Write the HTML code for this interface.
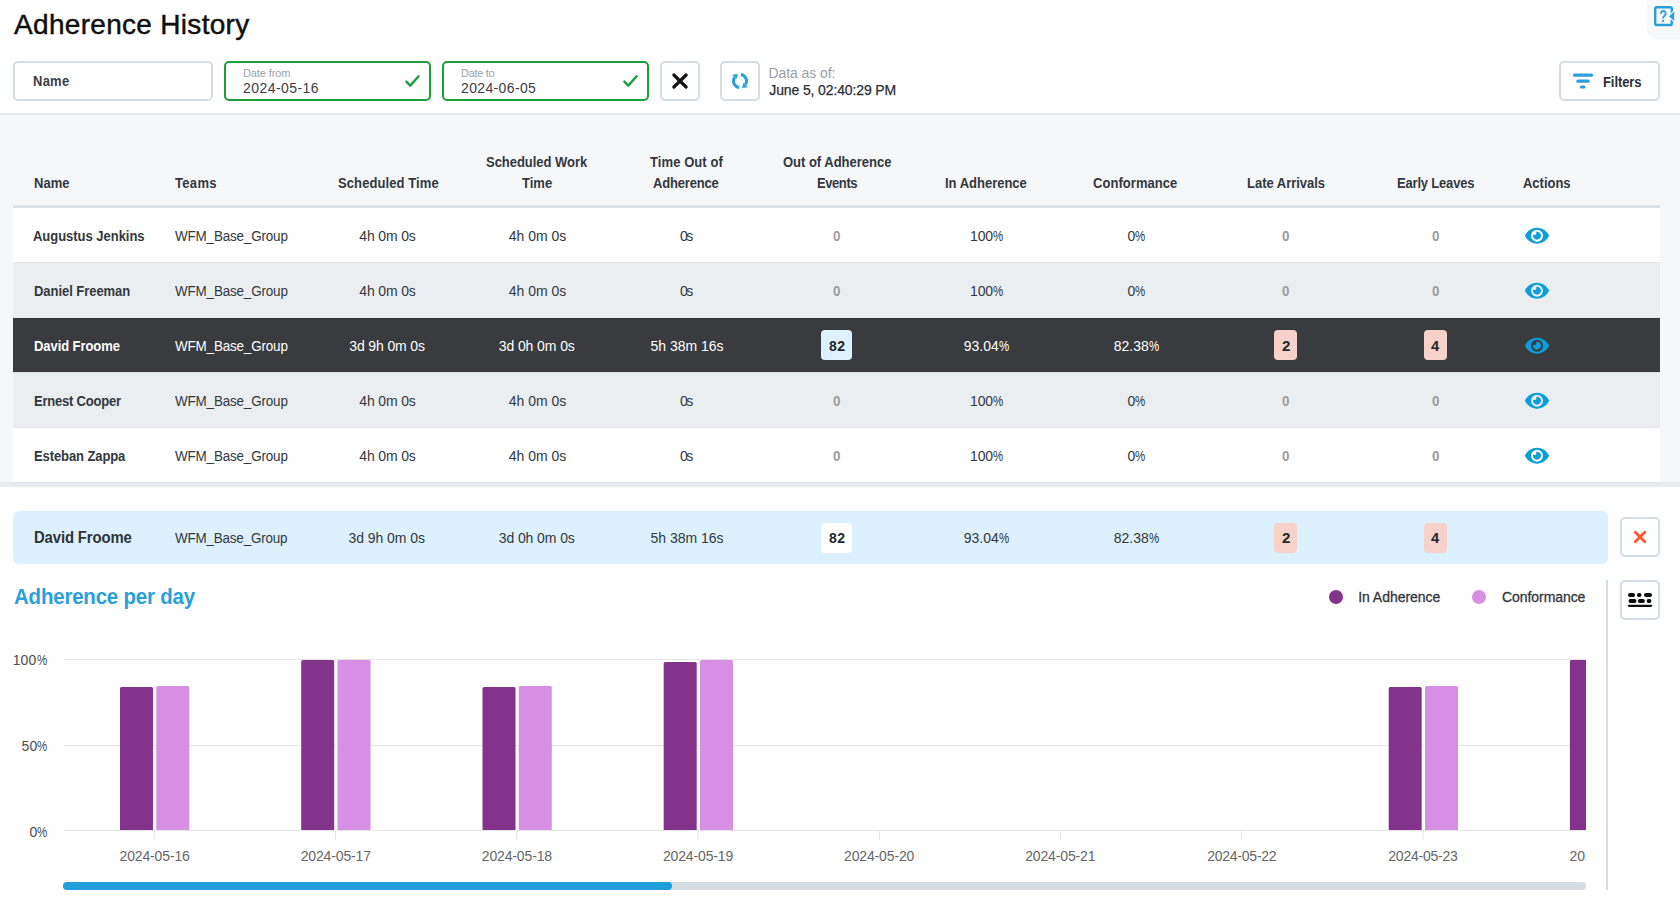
<!DOCTYPE html>
<html>
<head>
<meta charset="utf-8">
<title>Adherence History</title>
<style>
*{box-sizing:border-box;margin:0;padding:0}
html,body{width:1680px;height:907px;overflow:hidden;background:#fff}
body{font-family:"Liberation Sans",sans-serif;color:#33383d;position:relative;font-size:14px}
.abs{position:absolute}
.t{position:absolute;white-space:nowrap;transform-origin:0 0}
.pc{display:inline-block;font-style:normal;transform:scaleX(0.82);transform-origin:0 0;margin-right:-2.25px}
.box{position:absolute;top:61px;height:40px;border:2px solid #d3dde5;border-radius:5px;background:#fff}
.box.g{border-color:#1b9e3a}
.btn{position:absolute;width:40px;height:40px;border:2px solid #d3dde5;border-radius:5px;background:#fff}
.row{position:absolute;left:13px;width:1647px;height:55px;border-bottom:1px solid #e1e5e9;background:#fff}
.row.alt{background:#ebeef1}
.row.sel{background:#3a3b3e;border-bottom:1px solid #dfe3e7}
.bdg{position:absolute;height:30px;border-radius:4px}
.eye{position:absolute;left:1525px;width:24px;height:21.33px}
</style>
</head>
<body>
<div class="abs" style="left:0;top:113px;width:1680px;height:2px;background:#e9ebee"></div>
<div class="abs" style="left:0;top:115px;width:1680px;height:368px;background:#f6f7f9"></div>
<div class="abs" style="left:0;top:482px;width:1680px;height:5px;background:#e8ebee"></div>
<div class="box" style="left:13px;width:200px"></div>
<div class="box g" style="left:224px;width:207px"></div><svg class="abs" style="left:402.6px;top:72px" width="20" height="18" viewBox="0 0 20 18"><path d="M3.4 9.6 L7.3 13.6 L15.6 4.3" fill="none" stroke="#1f9e3d" stroke-width="2.4" stroke-linecap="round" stroke-linejoin="round"/></svg>
<div class="box g" style="left:442px;width:207px"></div><svg class="abs" style="left:620.6px;top:72px" width="20" height="18" viewBox="0 0 20 18"><path d="M3.4 9.6 L7.3 13.6 L15.6 4.3" fill="none" stroke="#1f9e3d" stroke-width="2.4" stroke-linecap="round" stroke-linejoin="round"/></svg>
<div class="btn" style="left:660px;top:61px"></div><svg class="abs" style="left:670px;top:71px" width="20" height="20" viewBox="0 0 20 20"><path d="M3.9 4.0 L16.1 16.0 M16.1 4.0 L3.9 16.0" stroke="#161616" stroke-width="3.3" stroke-linecap="round" fill="none"/></svg>
<div class="btn" style="left:720px;top:61px"></div><svg class="abs" style="left:732px;top:73px" width="16" height="16" viewBox="0 0 16 16"><g fill="none" stroke="#2a9fd8" stroke-width="3"><path d="M7.1 14.44 A6.5 6.5 0 0 1 2.68 4.27"/><path d="M8.9 1.56 A6.5 6.5 0 0 1 13.32 11.73"/></g><path d="M0.1 1.7 L5.9 1.1 L4.7 6.0 Z" fill="#2a9fd8"/><path d="M15.9 14.3 L10.1 14.9 L11.3 10.0 Z" fill="#2a9fd8"/></svg>
<div class="btn" style="left:1559px;top:61px;width:101px"></div><svg class="abs" style="left:1573px;top:73px" width="22" height="18" viewBox="0 0 22 18"><g fill="#2a9fd8"><rect x="0" y="0.6" width="20" height="3.2" rx="1.6"/><rect x="3.3" y="6.6" width="13.4" height="3.2" rx="1.6"/><rect x="6.8" y="12.4" width="5.8" height="3.2" rx="1.6"/></g></svg>
<div class="abs" style="left:1649px;top:-8px;width:44px;height:45px;background:#f7f8fa;border-radius:9px;box-shadow:0 1px 5px rgba(0,0,0,0.07)"></div>
<svg class="abs" style="left:1652px;top:4px" width="28" height="24" viewBox="0 0 28 24"><rect x="3.2" y="3.2" width="16.6" height="17.8" rx="1.6" fill="none" stroke="#2a9fd8" stroke-width="2.4"/><path d="M15.2 12.2 L24 4.4 L24 20 Z" fill="#f7f8fa"/><path d="M17 12.2 L22.2 7.4 L22.2 17 Z" fill="#2a9fd8"/><text transform="translate(11.2 18) scale(0.8 1)" font-family="Liberation Sans, sans-serif" font-size="16" font-weight="bold" fill="#2a9fd8" text-anchor="middle">?</text></svg>
<div class="abs" style="left:13px;top:205px;width:1647px;height:3px;background:#dde2e7"></div>
<div class="row " style="top:208px"></div>
<svg class="eye" style="top:224.6px" viewBox="0 0 576 512"><path fill="#0c9ddb" d="M572.52 241.4C518.29 135.59 410.93 64 288 64S57.68 135.64 3.48 241.41a32.35 32.35 0 0 0 0 29.19C57.71 376.41 165.07 448 288 448s230.32-71.64 284.52-177.41a32.35 32.35 0 0 0 0-29.19zM288 400a144 144 0 1 1 144-144 143.93 143.93 0 0 1-144 144zm0-240a95.31 95.31 0 0 0-25.31 3.79 47.85 47.85 0 0 1-66.9 66.9A95.78 95.78 0 1 0 288 160z"/></svg>
<div class="row alt" style="top:263px"></div>
<svg class="eye" style="top:279.6px" viewBox="0 0 576 512"><path fill="#0c9ddb" d="M572.52 241.4C518.29 135.59 410.93 64 288 64S57.68 135.64 3.48 241.41a32.35 32.35 0 0 0 0 29.19C57.71 376.41 165.07 448 288 448s230.32-71.64 284.52-177.41a32.35 32.35 0 0 0 0-29.19zM288 400a144 144 0 1 1 144-144 143.93 143.93 0 0 1-144 144zm0-240a95.31 95.31 0 0 0-25.31 3.79 47.85 47.85 0 0 1-66.9 66.9A95.78 95.78 0 1 0 288 160z"/></svg>
<div class="row sel" style="top:318px"></div>
<svg class="eye" style="top:334.6px" viewBox="0 0 576 512"><path fill="#0c9ddb" d="M572.52 241.4C518.29 135.59 410.93 64 288 64S57.68 135.64 3.48 241.41a32.35 32.35 0 0 0 0 29.19C57.71 376.41 165.07 448 288 448s230.32-71.64 284.52-177.41a32.35 32.35 0 0 0 0-29.19zM288 400a144 144 0 1 1 144-144 143.93 143.93 0 0 1-144 144zm0-240a95.31 95.31 0 0 0-25.31 3.79 47.85 47.85 0 0 1-66.9 66.9A95.78 95.78 0 1 0 288 160z"/></svg>
<div class="row alt" style="top:373px"></div>
<svg class="eye" style="top:389.6px" viewBox="0 0 576 512"><path fill="#0c9ddb" d="M572.52 241.4C518.29 135.59 410.93 64 288 64S57.68 135.64 3.48 241.41a32.35 32.35 0 0 0 0 29.19C57.71 376.41 165.07 448 288 448s230.32-71.64 284.52-177.41a32.35 32.35 0 0 0 0-29.19zM288 400a144 144 0 1 1 144-144 143.93 143.93 0 0 1-144 144zm0-240a95.31 95.31 0 0 0-25.31 3.79 47.85 47.85 0 0 1-66.9 66.9A95.78 95.78 0 1 0 288 160z"/></svg>
<div class="row " style="top:428px"></div>
<svg class="eye" style="top:444.6px" viewBox="0 0 576 512"><path fill="#0c9ddb" d="M572.52 241.4C518.29 135.59 410.93 64 288 64S57.68 135.64 3.48 241.41a32.35 32.35 0 0 0 0 29.19C57.71 376.41 165.07 448 288 448s230.32-71.64 284.52-177.41a32.35 32.35 0 0 0 0-29.19zM288 400a144 144 0 1 1 144-144 143.93 143.93 0 0 1-144 144zm0-240a95.31 95.31 0 0 0-25.31 3.79 47.85 47.85 0 0 1-66.9 66.9A95.78 95.78 0 1 0 288 160z"/></svg>
<div class="bdg" style="left:821px;top:330px;width:31px;background:#dff1fd"></div>
<div class="bdg" style="left:1274px;top:330px;width:23px;background:#f7d2ca"></div>
<div class="bdg" style="left:1424px;top:330px;width:23px;background:#f7d2ca"></div>
<div class="abs" style="left:13px;top:511px;width:1595px;height:53px;background:#dcf1fd;border-radius:6px"></div>
<div class="bdg" style="left:821px;top:523px;width:31px;background:#ffffff"></div>
<div class="bdg" style="left:1274px;top:523px;width:23px;background:#f7d2ca"></div>
<div class="bdg" style="left:1424px;top:523px;width:23px;background:#f7d2ca"></div>
<div class="btn" style="left:1620px;top:517px"></div><svg class="abs" style="left:1630px;top:527px" width="20" height="20" viewBox="0 0 20 20"><path d="M5.25 5.25 L14.75 14.75 M14.75 5.25 L5.25 14.75" stroke="#ff5632" stroke-width="2.8" stroke-linecap="round" fill="none"/></svg>
<div class="abs" style="left:1329px;top:590px;width:14px;height:14px;border-radius:7px;background:#83338c"></div>
<div class="abs" style="left:1472px;top:590px;width:14px;height:14px;border-radius:7px;background:#d68fe2"></div>
<div class="abs" style="left:1606px;top:580px;width:2px;height:310px;background:#d5dfe6"></div>
<div class="btn" style="left:1620px;top:580px"></div><svg class="abs" style="left:1628px;top:590px" width="24" height="20" viewBox="0 0 24 20"><g fill="#0d0d0d"><rect x="0" y="2.9" width="7" height="4" rx="2"/><rect x="8.9" y="2.9" width="4.6" height="4" rx="2"/><rect x="16" y="3.1" width="8" height="4" rx="2"/><rect x="0.5" y="9.1" width="8" height="3.8" rx="1.9"/><rect x="9.9" y="9.1" width="7" height="3.8" rx="1.9"/><rect x="18.6" y="9.1" width="4.8" height="3.8" rx="1.9"/><rect x="0" y="14.8" width="24" height="2.2" rx="1"/></g></svg>
<svg class="abs" style="left:0;top:640px" width="1600" height="267" viewBox="0 640 1600 267">
<defs><clipPath id="cp"><rect x="64" y="650" width="1522" height="230"/></clipPath></defs>
<line x1="64" x2="1586" y1="659.5" y2="659.5" stroke="#e6e6e6" stroke-width="1"/>
<line x1="64" x2="1586" y1="745.5" y2="745.5" stroke="#e6e6e6" stroke-width="1"/>
<line x1="64" x2="1586" y1="830.5" y2="830.5" stroke="#e6e6e6" stroke-width="1"/>
<g clip-path="url(#cp)">
<line x1="154.3" x2="154.3" y1="831" y2="840" stroke="#e6e6e6" stroke-width="1"/>
<line x1="335.5" x2="335.5" y1="831" y2="840" stroke="#e6e6e6" stroke-width="1"/>
<line x1="516.8" x2="516.8" y1="831" y2="840" stroke="#e6e6e6" stroke-width="1"/>
<line x1="698.0" x2="698.0" y1="831" y2="840" stroke="#e6e6e6" stroke-width="1"/>
<line x1="879.3" x2="879.3" y1="831" y2="840" stroke="#e6e6e6" stroke-width="1"/>
<line x1="1060.5" x2="1060.5" y1="831" y2="840" stroke="#e6e6e6" stroke-width="1"/>
<line x1="1241.7" x2="1241.7" y1="831" y2="840" stroke="#e6e6e6" stroke-width="1"/>
<line x1="1423.0" x2="1423.0" y1="831" y2="840" stroke="#e6e6e6" stroke-width="1"/>
<line x1="1604.2" x2="1604.2" y1="831" y2="840" stroke="#e6e6e6" stroke-width="1"/>
<path d="M120.0 830 V688.5 Q120.0 687 121.5 687 H151.5 Q153.0 687 153.0 688.5 V830 Z" fill="#83338c"/>
<path d="M156.3 830 V687.5 Q156.3 686 157.8 686 H187.8 Q189.3 686 189.3 687.5 V830 Z" fill="#d68fe2"/>
<path d="M301.2 830 V661.5 Q301.2 660 302.7 660 H332.7 Q334.2 660 334.2 661.5 V830 Z" fill="#83338c"/>
<path d="M337.5 830 V661.5 Q337.5 660 339.0 660 H369.0 Q370.5 660 370.5 661.5 V830 Z" fill="#d68fe2"/>
<path d="M482.5 830 V688.5 Q482.5 687 484.0 687 H514.0 Q515.5 687 515.5 688.5 V830 Z" fill="#83338c"/>
<path d="M518.8 830 V687.5 Q518.8 686 520.3 686 H550.3 Q551.8 686 551.8 687.5 V830 Z" fill="#d68fe2"/>
<path d="M663.7 830 V663.5 Q663.7 662 665.2 662 H695.2 Q696.7 662 696.7 663.5 V830 Z" fill="#83338c"/>
<path d="M700.0 830 V661.5 Q700.0 660 701.5 660 H731.5 Q733.0 660 733.0 661.5 V830 Z" fill="#d68fe2"/>
<path d="M1388.7 830 V688.5 Q1388.7 687 1390.2 687 H1420.2 Q1421.7 687 1421.7 688.5 V830 Z" fill="#83338c"/>
<path d="M1425.0 830 V687.5 Q1425.0 686 1426.5 686 H1456.5 Q1458.0 686 1458.0 687.5 V830 Z" fill="#d68fe2"/>
<path d="M1569.9 830 V661.5 Q1569.9 660 1571.4 660 H1601.4 Q1602.9 660 1602.9 661.5 V830 Z" fill="#83338c"/>
<path d="M1606.2 830 V661.5 Q1606.2 660 1607.7 660 H1637.7 Q1639.2 660 1639.2 661.5 V830 Z" fill="#d68fe2"/>
</g>
<rect x="63" y="882" width="1523" height="8" rx="4" fill="#d5dde3"/>
<rect x="63" y="882" width="609" height="8" rx="4" fill="#209fdb"/>
</svg>
<div class="abs" style="left:1560px;top:845px;width:26px;height:22px;overflow:hidden"><span class="t" style="left:9.6px;top:2px;font-size:14px;line-height:18px;color:#666666;letter-spacing:-0.1px">2024-05-24</span></div>
<span id="title" class="t" style="left:14.06px;top:8px;font-size:28px;line-height:33px;font-weight:normal;color:#101010;letter-spacing:0.304px;-webkit-text-stroke:0.45px #101010;">Adherence History</span>
<span id="nameinp" class="t" style="left:32.78px;top:72px;font-size:14px;line-height:18px;font-weight:bold;color:#3a4047;letter-spacing:0.258px;transform:scaleX(0.93);">Name</span>
<span id="dfl" class="t" style="left:243.00px;top:66px;font-size:11px;line-height:14px;font-weight:normal;color:#9aa3ab;letter-spacing:-0.113px;">Date from</span>
<span id="dfv" class="t" style="left:243.00px;top:79px;font-size:14px;line-height:18px;font-weight:normal;color:#3b4046;letter-spacing:0.440px;">2024-05-16</span>
<span id="dtl" class="t" style="left:461.00px;top:66px;font-size:11px;line-height:14px;font-weight:normal;color:#9aa3ab;letter-spacing:-0.300px;">Date to</span>
<span id="dtv" class="t" style="left:461.00px;top:79px;font-size:14px;line-height:18px;font-weight:normal;color:#3b4046;letter-spacing:0.360px;">2024-06-05</span>
<span id="dao" class="t" style="left:768.44px;top:64px;font-size:14px;line-height:18px;font-weight:normal;color:#9aa0a6;letter-spacing:-0.072px;">Data as of:</span>
<span id="june" class="t" style="left:769.34px;top:81px;font-size:14px;line-height:18px;font-weight:normal;color:#2b2f33;letter-spacing:-0.130px;-webkit-text-stroke:0.25px #2b2f33;">June 5, 02:40:29 PM</span>
<span id="filters" class="t" style="left:1603.28px;top:73px;font-size:14px;line-height:18px;font-weight:bold;color:#2b2f34;letter-spacing:-0.097px;transform:scaleX(0.93);">Filters</span>
<span id="hName" class="t" style="left:34.06px;top:174px;font-size:14px;line-height:18px;font-weight:bold;color:#33383d;letter-spacing:0.000px;transform:scaleX(0.93);">Name</span>
<span id="hTeams" class="t" style="left:175.00px;top:174px;font-size:14px;line-height:18px;font-weight:bold;color:#33383d;letter-spacing:0.339px;transform:scaleX(0.93);">Teams</span>
<span id="hST" class="t" style="left:337.56px;top:174px;font-size:14px;line-height:18px;font-weight:bold;color:#33383d;letter-spacing:0.089px;transform:scaleX(0.93);">Scheduled Time</span>
<span id="hSW1" class="t" style="left:485.94px;top:153px;font-size:14px;line-height:18px;font-weight:bold;color:#33383d;letter-spacing:-0.045px;transform:scaleX(0.93);">Scheduled Work</span>
<span id="hSW2" class="t" style="left:522.00px;top:174px;font-size:14px;line-height:18px;font-weight:bold;color:#33383d;letter-spacing:0.000px;transform:scaleX(0.93);">Time</span>
<span id="hTO1" class="t" style="left:649.94px;top:153px;font-size:14px;line-height:18px;font-weight:bold;color:#33383d;letter-spacing:0.077px;transform:scaleX(0.93);">Time Out of</span>
<span id="hTO2" class="t" style="left:653.44px;top:174px;font-size:14px;line-height:18px;font-weight:bold;color:#33383d;letter-spacing:-0.194px;transform:scaleX(0.93);">Adherence</span>
<span id="hOA1" class="t" style="left:782.50px;top:153px;font-size:14px;line-height:18px;font-weight:bold;color:#33383d;letter-spacing:-0.026px;transform:scaleX(0.93);">Out of Adherence</span>
<span id="hOA2" class="t" style="left:816.56px;top:174px;font-size:14px;line-height:18px;font-weight:bold;color:#33383d;letter-spacing:-0.465px;transform:scaleX(0.93);">Events</span>
<span id="hIA" class="t" style="left:944.94px;top:174px;font-size:14px;line-height:18px;font-weight:bold;color:#33383d;letter-spacing:-0.018px;transform:scaleX(0.93);">In Adherence</span>
<span id="hCf" class="t" style="left:1093.44px;top:174px;font-size:14px;line-height:18px;font-weight:bold;color:#33383d;letter-spacing:0.039px;transform:scaleX(0.93);">Conformance</span>
<span id="hLA" class="t" style="left:1247.06px;top:174px;font-size:14px;line-height:18px;font-weight:bold;color:#33383d;letter-spacing:-0.032px;transform:scaleX(0.93);">Late Arrivals</span>
<span id="hEL" class="t" style="left:1397.06px;top:174px;font-size:14px;line-height:18px;font-weight:bold;color:#33383d;letter-spacing:-0.211px;transform:scaleX(0.93);">Early Leaves</span>
<span id="hAc" class="t" style="left:1522.78px;top:174px;font-size:14px;line-height:18px;font-weight:bold;color:#33383d;letter-spacing:-0.032px;transform:scaleX(0.93);">Actions</span>
<span id="r0n" class="t" style="left:32.94px;top:227px;font-size:14px;line-height:18px;font-weight:bold;color:#33383d;letter-spacing:-0.039px;transform:scaleX(0.93);">Augustus Jenkins</span>
<span id="r0t" class="t" style="left:175.00px;top:227px;font-size:14px;line-height:18px;font-weight:normal;color:#33383d;letter-spacing:-0.173px;transform:scaleX(0.96);">WFM_Base_Group</span>
<span id="r0a" class="t" style="left:359.34px;top:227px;font-size:14px;line-height:18px;font-weight:normal;color:#33383d;letter-spacing:-0.154px;">4h 0m 0s</span>
<span id="r0b" class="t" style="left:508.78px;top:227px;font-size:14px;line-height:18px;font-weight:normal;color:#33383d;letter-spacing:-0.026px;">4h 0m 0s</span>
<span id="r0c" class="t" style="left:680.06px;top:227px;font-size:14px;line-height:18px;font-weight:normal;color:#33383d;letter-spacing:-1.620px;">0s</span>
<span id="r0d" class="t" style="left:833.00px;top:227px;font-size:14px;line-height:18px;font-weight:bold;color:#9c9c9c;letter-spacing:0.000px;transform:scaleX(0.95);">0</span>
<span id="r0e" class="t" style="left:970.00px;top:227px;font-size:14px;line-height:18px;font-weight:normal;color:#33383d;letter-spacing:-0.120px;">100<i class="pc">%</i></span>
<span id="r0f" class="t" style="left:1127.56px;top:227px;font-size:14px;line-height:18px;font-weight:normal;color:#33383d;letter-spacing:-0.360px;">0<i class="pc">%</i></span>
<span id="r0g" class="t" style="left:1282.00px;top:227px;font-size:14px;line-height:18px;font-weight:bold;color:#9c9c9c;letter-spacing:0.000px;transform:scaleX(0.95);">0</span>
<span id="r0h" class="t" style="left:1432.00px;top:227px;font-size:14px;line-height:18px;font-weight:bold;color:#9c9c9c;letter-spacing:0.000px;transform:scaleX(0.95);">0</span>
<span id="r1n" class="t" style="left:34.06px;top:282px;font-size:14px;line-height:18px;font-weight:bold;color:#33383d;letter-spacing:-0.060px;transform:scaleX(0.93);">Daniel Freeman</span>
<span id="r1t" class="t" style="left:175.00px;top:282px;font-size:14px;line-height:18px;font-weight:normal;color:#33383d;letter-spacing:-0.173px;transform:scaleX(0.96);">WFM_Base_Group</span>
<span id="r1a" class="t" style="left:359.34px;top:282px;font-size:14px;line-height:18px;font-weight:normal;color:#33383d;letter-spacing:-0.154px;">4h 0m 0s</span>
<span id="r1b" class="t" style="left:508.78px;top:282px;font-size:14px;line-height:18px;font-weight:normal;color:#33383d;letter-spacing:-0.026px;">4h 0m 0s</span>
<span id="r1c" class="t" style="left:680.06px;top:282px;font-size:14px;line-height:18px;font-weight:normal;color:#33383d;letter-spacing:-1.620px;">0s</span>
<span id="r1d" class="t" style="left:833.00px;top:282px;font-size:14px;line-height:18px;font-weight:bold;color:#9c9c9c;letter-spacing:0.000px;transform:scaleX(0.95);">0</span>
<span id="r1e" class="t" style="left:970.00px;top:282px;font-size:14px;line-height:18px;font-weight:normal;color:#33383d;letter-spacing:-0.120px;">100<i class="pc">%</i></span>
<span id="r1f" class="t" style="left:1127.56px;top:282px;font-size:14px;line-height:18px;font-weight:normal;color:#33383d;letter-spacing:-0.360px;">0<i class="pc">%</i></span>
<span id="r1g" class="t" style="left:1282.00px;top:282px;font-size:14px;line-height:18px;font-weight:bold;color:#9c9c9c;letter-spacing:0.000px;transform:scaleX(0.95);">0</span>
<span id="r1h" class="t" style="left:1432.00px;top:282px;font-size:14px;line-height:18px;font-weight:bold;color:#9c9c9c;letter-spacing:0.000px;transform:scaleX(0.95);">0</span>
<span id="r2n" class="t" style="left:34.06px;top:337px;font-size:14px;line-height:18px;font-weight:bold;color:#ffffff;letter-spacing:-0.088px;transform:scaleX(0.93);">David Froome</span>
<span id="r2t" class="t" style="left:175.00px;top:337px;font-size:14px;line-height:18px;font-weight:normal;color:#ffffff;letter-spacing:-0.173px;transform:scaleX(0.96);">WFM_Base_Group</span>
<span id="r3n" class="t" style="left:34.06px;top:392px;font-size:14px;line-height:18px;font-weight:bold;color:#33383d;letter-spacing:-0.242px;transform:scaleX(0.93);">Ernest Cooper</span>
<span id="r3t" class="t" style="left:175.00px;top:392px;font-size:14px;line-height:18px;font-weight:normal;color:#33383d;letter-spacing:-0.173px;transform:scaleX(0.96);">WFM_Base_Group</span>
<span id="r3a" class="t" style="left:359.34px;top:392px;font-size:14px;line-height:18px;font-weight:normal;color:#33383d;letter-spacing:-0.154px;">4h 0m 0s</span>
<span id="r3b" class="t" style="left:508.78px;top:392px;font-size:14px;line-height:18px;font-weight:normal;color:#33383d;letter-spacing:-0.026px;">4h 0m 0s</span>
<span id="r3c" class="t" style="left:680.06px;top:392px;font-size:14px;line-height:18px;font-weight:normal;color:#33383d;letter-spacing:-1.620px;">0s</span>
<span id="r3d" class="t" style="left:833.00px;top:392px;font-size:14px;line-height:18px;font-weight:bold;color:#9c9c9c;letter-spacing:0.000px;transform:scaleX(0.95);">0</span>
<span id="r3e" class="t" style="left:970.00px;top:392px;font-size:14px;line-height:18px;font-weight:normal;color:#33383d;letter-spacing:-0.120px;">100<i class="pc">%</i></span>
<span id="r3f" class="t" style="left:1127.56px;top:392px;font-size:14px;line-height:18px;font-weight:normal;color:#33383d;letter-spacing:-0.360px;">0<i class="pc">%</i></span>
<span id="r3g" class="t" style="left:1282.00px;top:392px;font-size:14px;line-height:18px;font-weight:bold;color:#9c9c9c;letter-spacing:0.000px;transform:scaleX(0.95);">0</span>
<span id="r3h" class="t" style="left:1432.00px;top:392px;font-size:14px;line-height:18px;font-weight:bold;color:#9c9c9c;letter-spacing:0.000px;transform:scaleX(0.95);">0</span>
<span id="r4n" class="t" style="left:34.06px;top:447px;font-size:14px;line-height:18px;font-weight:bold;color:#33383d;letter-spacing:-0.113px;transform:scaleX(0.93);">Esteban Zappa</span>
<span id="r4t" class="t" style="left:175.00px;top:447px;font-size:14px;line-height:18px;font-weight:normal;color:#33383d;letter-spacing:-0.173px;transform:scaleX(0.96);">WFM_Base_Group</span>
<span id="r4a" class="t" style="left:359.34px;top:447px;font-size:14px;line-height:18px;font-weight:normal;color:#33383d;letter-spacing:-0.154px;">4h 0m 0s</span>
<span id="r4b" class="t" style="left:508.78px;top:447px;font-size:14px;line-height:18px;font-weight:normal;color:#33383d;letter-spacing:-0.026px;">4h 0m 0s</span>
<span id="r4c" class="t" style="left:680.06px;top:447px;font-size:14px;line-height:18px;font-weight:normal;color:#33383d;letter-spacing:-1.620px;">0s</span>
<span id="r4d" class="t" style="left:833.00px;top:447px;font-size:14px;line-height:18px;font-weight:bold;color:#9c9c9c;letter-spacing:0.000px;transform:scaleX(0.95);">0</span>
<span id="r4e" class="t" style="left:970.00px;top:447px;font-size:14px;line-height:18px;font-weight:normal;color:#33383d;letter-spacing:-0.120px;">100<i class="pc">%</i></span>
<span id="r4f" class="t" style="left:1127.56px;top:447px;font-size:14px;line-height:18px;font-weight:normal;color:#33383d;letter-spacing:-0.360px;">0<i class="pc">%</i></span>
<span id="r4g" class="t" style="left:1282.00px;top:447px;font-size:14px;line-height:18px;font-weight:bold;color:#9c9c9c;letter-spacing:0.000px;transform:scaleX(0.95);">0</span>
<span id="r4h" class="t" style="left:1432.00px;top:447px;font-size:14px;line-height:18px;font-weight:bold;color:#9c9c9c;letter-spacing:0.000px;transform:scaleX(0.95);">0</span>
<span id="r2a" class="t" style="left:349.34px;top:337px;font-size:14px;line-height:18px;font-weight:normal;color:#ffffff;letter-spacing:-0.144px;">3d 9h 0m 0s</span>
<span id="r2b" class="t" style="left:498.72px;top:337px;font-size:14px;line-height:18px;font-weight:normal;color:#ffffff;letter-spacing:-0.090px;">3d 0h 0m 0s</span>
<span id="r2c" class="t" style="left:650.50px;top:337px;font-size:14px;line-height:18px;font-weight:normal;color:#ffffff;letter-spacing:-0.020px;">5h 38m 16s</span>
<span id="r2d" class="t" style="left:829.00px;top:337px;font-size:14px;line-height:18px;font-weight:bold;color:#23282d;letter-spacing:0.468px;">82</span>
<span id="r2e" class="t" style="left:963.78px;top:337px;font-size:14px;line-height:18px;font-weight:normal;color:#ffffff;letter-spacing:0.000px;">93.04<i class="pc">%</i></span>
<span id="r2f" class="t" style="left:1113.78px;top:337px;font-size:14px;line-height:18px;font-weight:normal;color:#ffffff;letter-spacing:0.000px;">82.38<i class="pc">%</i></span>
<span id="r2g" class="t" style="left:1282.00px;top:337px;font-size:14px;line-height:18px;font-weight:bold;color:#23282d;letter-spacing:0.000px;transform:scaleX(1.08);">2</span>
<span id="r2h" class="t" style="left:1431.22px;top:337px;font-size:14px;line-height:18px;font-weight:bold;color:#23282d;letter-spacing:0.000px;transform:scaleX(1.05);">4</span>
<span id="dn" class="t" style="left:33.78px;top:528px;font-size:16px;line-height:19px;font-weight:bold;color:#2f3338;letter-spacing:-0.141px;transform:scaleX(0.93);">David Froome</span>
<span id="dt" class="t" style="left:174.94px;top:529px;font-size:14px;line-height:18px;font-weight:normal;color:#33383d;letter-spacing:-0.202px;transform:scaleX(0.96);">WFM_Base_Group</span>
<span id="da" class="t" style="left:348.44px;top:529px;font-size:14px;line-height:18px;font-weight:normal;color:#33383d;letter-spacing:-0.054px;">3d 9h 0m 0s</span>
<span id="db" class="t" style="left:498.72px;top:529px;font-size:14px;line-height:18px;font-weight:normal;color:#33383d;letter-spacing:-0.090px;">3d 0h 0m 0s</span>
<span id="dc" class="t" style="left:650.50px;top:529px;font-size:14px;line-height:18px;font-weight:normal;color:#33383d;letter-spacing:-0.020px;">5h 38m 16s</span>
<span id="dd" class="t" style="left:829.00px;top:529px;font-size:14px;line-height:18px;font-weight:bold;color:#23282d;letter-spacing:0.468px;">82</span>
<span id="de" class="t" style="left:963.78px;top:529px;font-size:14px;line-height:18px;font-weight:normal;color:#33383d;letter-spacing:0.000px;">93.04<i class="pc">%</i></span>
<span id="df" class="t" style="left:1113.78px;top:529px;font-size:14px;line-height:18px;font-weight:normal;color:#33383d;letter-spacing:0.000px;">82.38<i class="pc">%</i></span>
<span id="dg" class="t" style="left:1282.00px;top:529px;font-size:14px;line-height:18px;font-weight:bold;color:#23282d;letter-spacing:0.000px;transform:scaleX(1.08);">2</span>
<span id="dh" class="t" style="left:1431.22px;top:529px;font-size:14px;line-height:18px;font-weight:bold;color:#23282d;letter-spacing:0.000px;transform:scaleX(1.05);">4</span>
<span id="ctitle" class="t" style="left:14.06px;top:583px;font-size:22px;line-height:27px;font-weight:bold;color:#2a9fd8;letter-spacing:-0.206px;transform:scaleX(0.93);">Adherence per day</span>
<span id="lg1" class="t" style="left:1358.16px;top:588px;font-size:14px;line-height:18px;font-weight:normal;color:#33383d;letter-spacing:-0.033px;-webkit-text-stroke:0.3px #33383d;">In Adherence</span>
<span id="lg2" class="t" style="left:1502.06px;top:588px;font-size:14px;line-height:18px;font-weight:normal;color:#33383d;letter-spacing:-0.072px;-webkit-text-stroke:0.3px #33383d;">Conformance</span>
<span id="y100" class="t" style="left:12.66px;top:651px;font-size:14px;line-height:18px;font-weight:normal;color:#4d4d4d;letter-spacing:0.180px;">100<i class="pc">%</i></span>
<span id="y50" class="t" style="left:21.44px;top:737px;font-size:14px;line-height:18px;font-weight:normal;color:#4d4d4d;letter-spacing:0.180px;">50<i class="pc">%</i></span>
<span id="y0" class="t" style="left:29.50px;top:823px;font-size:14px;line-height:18px;font-weight:normal;color:#4d4d4d;letter-spacing:-0.360px;">0<i class="pc">%</i></span>
<span id="x0" class="t" style="left:119.50px;top:847px;font-size:14px;line-height:18px;font-weight:normal;color:#666666;letter-spacing:-0.140px;">2024-05-16</span>
<span id="x1" class="t" style="left:300.63px;top:847px;font-size:14px;line-height:18px;font-weight:normal;color:#666666;letter-spacing:-0.140px;">2024-05-17</span>
<span id="x2" class="t" style="left:481.76px;top:847px;font-size:14px;line-height:18px;font-weight:normal;color:#666666;letter-spacing:-0.140px;">2024-05-18</span>
<span id="x3" class="t" style="left:662.90px;top:847px;font-size:14px;line-height:18px;font-weight:normal;color:#666666;letter-spacing:-0.140px;">2024-05-19</span>
<span id="x4" class="t" style="left:844.03px;top:847px;font-size:14px;line-height:18px;font-weight:normal;color:#666666;letter-spacing:-0.140px;">2024-05-20</span>
<span id="x5" class="t" style="left:1025.16px;top:847px;font-size:14px;line-height:18px;font-weight:normal;color:#666666;letter-spacing:-0.140px;">2024-05-21</span>
<span id="x6" class="t" style="left:1207.19px;top:847px;font-size:14px;line-height:18px;font-weight:normal;color:#666666;letter-spacing:-0.240px;">2024-05-22</span>
<span id="x7" class="t" style="left:1388.32px;top:847px;font-size:14px;line-height:18px;font-weight:normal;color:#666666;letter-spacing:-0.240px;">2024-05-23</span>
</body>
</html>
